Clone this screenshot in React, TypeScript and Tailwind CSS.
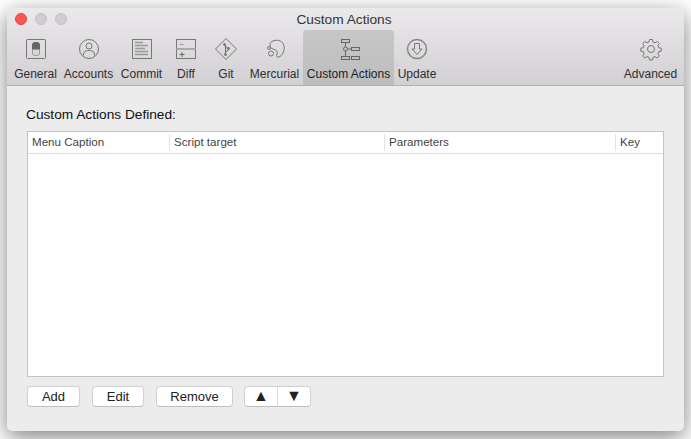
const Ic = ({ children }: any) => (
  <svg width="32" height="32" viewBox="0 0 32 32" fill="none" stroke="#777" strokeWidth="1">
    {children}
  </svg>
)

const icons: any = {
  general: (
    <Ic>
      <rect x="6.500" y="6.500" width="19" height="19" rx="1" />
      <rect x="12.500" y="9.500" width="7" height="13" rx="2.500" fill="#d8d8d8" stroke="#999" />
      <path d="M12.500 16v-4a2.500 2.500 0 0 1 2.500-2.500h2a2.500 2.500 0 0 1 2.500 2.500v4z" fill="#666" stroke="#666" />
    </Ic>
  ),
  accounts: (
    <Ic>
      <circle cx="16" cy="16" r="9.500" />
      <circle cx="16" cy="13" r="3" />
      <path d="M10.500 22.500v-1.500c0-2 2.500-3 4-3.500h3c1.500.5 4 1.500 4 3.500v1.500" />
    </Ic>
  ),
  commit: (
    <Ic>
      <rect x="6.500" y="6.500" width="19" height="19" />
      <path d="M9 9.500h8M9 12.500h13M9 15.500h10M9 18.500h13M9 21.500h13" stroke="#999" strokeWidth="1.500" />
    </Ic>
  ),
  diff: (
    <Ic>
      <rect x="6.500" y="6.500" width="19" height="19" />
      <path d="M6.500 16h19" stroke="#aaa" strokeWidth="2" />
      <path d="M9.500 11.500h4" stroke="#999" />
      <path d="M9.500 21.500h5M12 19v5" stroke="#666" />
    </Ic>
  ),
  git: (
    <Ic>
      <path d="M16 5.500 26.500 16 16 26.500 5.500 16z" strokeLinejoin="round" />
      <path d="M14 11.500l4 4M15.500 12.500v9M18 15.500c.5 2-1 3-2.500 3.500" stroke="#666" />
      <circle cx="14.500" cy="11.500" r="1" fill="#777" />
      <circle cx="18.500" cy="15.500" r="1" fill="#777" />
      <circle cx="15.500" cy="21.500" r="1" fill="#777" />
    </Ic>
  ),
  mercurial: (
    <Ic>
      <path d="M14 8c5-2 10 0 11 5 1 5-2 10-5 11-2 .5-3-1-2-3 1-3-1-4-4-5-2-.5-3-2-3-4 0-2 1-3.500 3-4z" />
      <circle cx="10" cy="15" r="1.500" />
      <circle cx="12" cy="20.500" r="2.500" />
    </Ic>
  ),
  custom: (
    <Ic>
      <rect x="8.500" y="6.500" width="8" height="3" stroke="#666" />
      <rect x="8.500" y="23.500" width="8" height="3" stroke="#666" />
      <rect x="18.500" y="14.500" width="8" height="3" stroke="#666" />
      <rect x="18.500" y="23.500" width="8" height="3" stroke="#666" />
      <circle cx="12.500" cy="16" r="2" stroke="#666" />
      <path d="M12.500 9.500V14M12.500 18v5.500M14.500 16h4" stroke="#666" />
    </Ic>
  ),
  update: (
    <Ic>
      <circle cx="16" cy="16" r="9.500" strokeWidth="1.500" stroke="#888" />
      <path d="M13.500 10.500h5v5.500h2.500L16 21.500 11 16h2.500z" stroke="#777" strokeLinejoin="round" />
    </Ic>
  ),
  advanced: (
    <Ic>
      <path
        d="M14.500 6.500h3l.5 2.500 2 .8 2.200-1.400 2.100 2.100-1.400 2.200.8 2 2.500.5v3l-2.500.5-.8 2 1.400 2.200-2.100 2.100-2.200-1.400-2 .8-.5 2.500h-3l-.5-2.500-2-.8-2.200 1.400-2.100-2.100 1.400-2.200-.8-2-2.500-.5v-3l2.500-.5.8-2-1.400-2.200 2.100-2.100 2.200 1.400 2-.8z"
        strokeLinejoin="round"
      />
      <circle cx="16" cy="16" r="3.500" />
    </Ic>
  ),
}

const ToolItem = ({ icon, label, active, cls }: any) => (
  <div
    className={`flex flex-col items-center ${cls} pt-[3px] h-[55px] rounded-t-[3px] ${
      active ? "bg-gradient-to-b from-[#c8c7c8] to-[#bebdbe] text-[#1c1c1c]" : "text-[#2e2e33]"
    }`}
  >
    {icons[icon]}
    <span className="text-[12px] leading-[14px] mt-[2px] whitespace-nowrap">{label}</span>
  </div>
)

const Btn = ({ label, className }: any) => (
  <button className={`h-[21px] bg-white rounded-[4px] border border-[#d0d0d0] border-b-[#bdbdbd] text-[13px] leading-[19px] text-[#222] ${className}`}>
    {label}
  </button>
)

const columns = [
  { label: "Menu Caption", cls: "w-[142px]" },
  { label: "Script target", cls: "w-[215px]" },
  { label: "Parameters", cls: "w-[231px]" },
  { label: "Key", cls: "flex-1" },
]

export default function App() {
  return (
    <div className="w-[691px] h-[439px] overflow-hidden bg-white pt-2 pl-[7px] font-['Liberation_Sans',sans-serif]">
      <div className="w-[677px] h-[423px] rounded-[5px] bg-[#ececec] shadow-[0_6px_22px_rgba(0,0,0,0.5)] overflow-hidden flex flex-col">
        <div className="h-[78px] shrink-0 bg-gradient-to-b from-[#ebe9eb] to-[#d2d0d2] border-b border-[#b1b1b1] flex flex-col">
          <div className="h-[22px] relative flex items-center justify-center">
            <div className="absolute left-2 top-[5px] flex gap-2">
              <div className="w-3 h-3 rounded-full bg-[#fc5753] border border-[#e0443e]" />
              <div className="w-3 h-3 rounded-full bg-[#cfcdcf] border border-[#c0bec0]" />
              <div className="w-3 h-3 rounded-full bg-[#cfcdcf] border border-[#c0bec0]" />
            </div>
            <span className="text-[13.7px] text-[#333] mt-[2px] -ml-[3px]">Custom Actions</span>
          </div>
          <div className="flex justify-between px-1">
            <div className="flex">
              <ToolItem icon="general" label="General" cls="w-[49px]" />
              <ToolItem icon="accounts" label="Accounts" cls="w-[57px]" />
              <ToolItem icon="commit" label="Commit" cls="w-[49px]" />
              <ToolItem icon="diff" label="Diff" cls="w-10" />
              <ToolItem icon="git" label="Git" cls="w-10" />
              <ToolItem icon="mercurial" label="Mercurial" cls="w-[57px]" />
              <ToolItem icon="custom" label="Custom Actions" cls="w-[91px]" active />
              <ToolItem icon="update" label="Update" cls="w-[46px]" />
            </div>
            <ToolItem icon="advanced" label="Advanced" cls="w-[59px]" />
          </div>
        </div>
        <div className="flex-1 flex flex-col px-5">
          <div className="text-[13.7px] leading-4 text-[#111] mt-[21px] -ml-[1px]">Custom Actions Defined:</div>
          <div className="mt-2 h-[246px] border border-[#c4c4c4] bg-white">
            <div className="h-[22px] border-b border-[#dcdcdc] flex items-center pb-[1px]">
              {columns.map((c, i) => (
                <div
                  key={c.label}
                  className={`${c.cls} h-[17px] pl-1 text-[11.6px] leading-[15px] text-[#444] ${i < 3 ? "border-r border-[#e2e2e2]" : ""}`}
                >
                  {c.label}
                </div>
              ))}
            </div>
          </div>
          <div className="flex mt-[9px]">
            <Btn label="Add" className="w-[53px]" />
            <Btn label="Edit" className="w-[52px] ml-3" />
            <Btn label="Remove" className="w-[77px] ml-3" />
            <div className="ml-[11px] w-[67px] h-[21px] bg-white rounded-[4px] border border-[#d0d0d0] border-b-[#bdbdbd] flex text-[16px] text-[#222] leading-[17px]">
              <div className="w-[33px] border-r border-[#dcdcdc] text-center">▲</div>
              <div className="flex-1 text-center">▼</div>
            </div>
          </div>
        </div>
      </div>
    </div>
  )
}
